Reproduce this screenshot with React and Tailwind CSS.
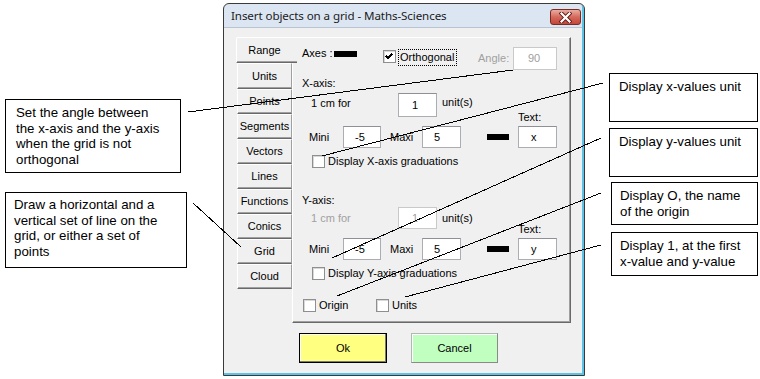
import React from "react";

const Check = ({ checked = false, className = "" }) => (
  <div
    className={`w-[13px] h-[13px] shrink-0 bg-white border border-[#8e8f8f] shadow-[inset_1px_1px_0_#d8d8d8] flex items-center justify-center ${className}`}
  >
    {checked && (
      <svg width="9" height="9" viewBox="0 0 9 9" shapeRendering="crispEdges">
        <path d="M1 4 L3 6 L7 2" stroke="#000" strokeWidth="2" fill="none" />
      </svg>
    )}
  </div>
);

const Field = ({ children, className = "" }) => (
  <div className={`shrink-0 bg-white border border-[#abadb3] border-t-[#8e9096] flex items-center ${className}`}>
    {children}
  </div>
);

const Tab = ({ label, className = "" }) => (
  <div
    className={`shrink-0 flex items-center justify-center border-l border-t border-l-white border-t-white border-r border-r-[#a0a0a0] border-b border-b-[#696969] shadow-[inset_0_-1px_0_#a0a0a0] ${className}`}
  >
    {label}
  </div>
);

export default function App() {
  return (
    <div className="relative w-[760px] h-[379px] bg-white flex overflow-hidden font-['Liberation_Sans',Arial,sans-serif] text-black">
      {/* Left annotations */}
      <div className="w-[223px] shrink-0 flex flex-col pl-[5px] text-[13.3px] leading-[15.5px]">
        <div className="mt-[99px] w-[176px] h-[74px] border border-black pl-[10px] pt-[5px] whitespace-nowrap">
          Set the angle between<br />the x-axis and the y-axis<br />when the grid is not<br />orthogonal
        </div>
        <div className="mt-[19px] w-[182px] h-[76px] border border-black pl-[8px] pt-[4px] whitespace-nowrap">
          Draw a horizontal and a<br />vertical set of line on the<br />grid, or either a set of<br />points
        </div>
      </div>

      {/* Dialog */}
      <div className="mt-[3px] w-[362px] h-[373px] shrink-0 flex flex-col border border-[#3a3a3a] rounded-t-[6px] bg-[#dce6f2] shadow-[inset_-2px_-2px_0_#5cc3e6] overflow-hidden">
        <div className="h-[23px] shrink-0 flex items-start justify-between pl-[7px] pr-[3px]">
          <div className="mt-[5px] text-[11.6px] leading-[14px] font-['Noto_Sans',sans-serif] text-[#1b1b1b] tracking-[-0.1px]">
            Insert objects on a grid - Maths-Sciences
          </div>
          <div className="mt-[5px] w-[31px] h-[16px] rounded-[3px] border border-[#7b2a20] bg-linear-to-b from-[#e9aca2] via-[#d4695c] to-[#c3453a] flex items-center justify-center">
            <svg width="13" height="11" viewBox="0 0 13 11">
              <path d="M2.5 1.5 L10.5 9.5 M10.5 1.5 L2.5 9.5" stroke="#5a1a12" strokeWidth="4" strokeLinecap="square" />
              <path d="M2.5 1.5 L10.5 9.5 M10.5 1.5 L2.5 9.5" stroke="#ffffff" strokeWidth="2.2" strokeLinecap="square" />
            </svg>
          </div>
        </div>

        <div className="flex-1 bg-[#f0f0f0] border-t border-t-[#b8c4d2] mr-[2px] mb-[2px] flex flex-col text-[11px] leading-[13px]">
          <div className="flex mt-[9px]">
            {/* Tabs */}
            <div className="w-[56px] ml-[12px] shrink-0 flex flex-col">
              <div className="relative z-10 h-[26px] w-[61px] shrink-0 flex items-center justify-center pr-[5px] bg-[#f0f0f0] border-l border-t border-l-white border-t-white border-b border-b-[#696969] shadow-[inset_0_-1px_0_#a0a0a0] rounded-tl-[2px]">
                Range
              </div>
              <Tab label="Units" className="h-[26px] w-[55px] ml-[1px]" />
              <Tab label="Points" className="h-[25px] w-[55px] ml-[1px]" />
              <Tab label="Segments" className="h-[25px] w-[55px] ml-[1px]" />
              <Tab label="Vectors" className="h-[25px] w-[55px] ml-[1px]" />
              <Tab label="Lines" className="h-[25px] w-[55px] ml-[1px]" />
              <Tab label="Functions" className="h-[25px] w-[55px] ml-[1px]" />
              <Tab label="Conics" className="h-[25px] w-[55px] ml-[1px]" />
              <Tab label="Grid" className="h-[25px] w-[55px] ml-[1px]" />
              <Tab label="Cloud" className="h-[25px] w-[55px] ml-[1px]" />
            </div>

            {/* Panel */}
            <div className="w-[279px] h-[286px] shrink-0 flex flex-col border border-t-white border-l-white border-r-[#696969] border-b-[#696969] shadow-[inset_-1px_-1px_0_#a0a0a0]">
              {/* Row A */}
              <div className="flex items-start mt-[9px] h-[23px]">
                <div className="ml-[9px] w-[32px] shrink-0">Axes :</div>
                <div className="w-[23px] h-[6px] mt-[4px] bg-black shrink-0" />
                <Check checked className="ml-[26px] mt-[3px]" />
                <div className="ml-[2px] mt-[2px] w-[59px] h-[17px] shrink-0 border border-dotted border-black flex items-center pl-[1px]">
                  Orthogonal
                </div>
                <div className="ml-[21px] w-[35px] mt-[5px] shrink-0 text-[#a0a0a0]">Angle:</div>
                <Field className="w-[44px] h-[23px] pl-[14px] border-[#c9c9c9] border-t-[#c9c9c9] text-[#a0a0a0]">90</Field>
              </div>

              {/* X-axis */}
              <div className="mt-[7px] h-[13px] ml-[9px]">X-axis:</div>

              <div className="flex items-start mt-[3px] h-[24px]">
                <div className="ml-[18px] w-[87px] mt-[4px] shrink-0">1 cm for</div>
                <Field className="w-[39px] h-[24px] pl-[13px]">1</Field>
                <div className="ml-[5px] w-[76px] mt-[3px] shrink-0">unit(s)</div>
                <div className="mt-[18px]">Text:</div>
              </div>

              <div className="flex items-center mt-[9px] h-[22px]">
                <div className="ml-[16px] w-[34px] shrink-0">Mini</div>
                <Field className="w-[38px] h-[22px] pl-[11px]">-5</Field>
                <div className="ml-[9px] w-[32px] shrink-0">Maxi</div>
                <Field className="w-[39px] h-[22px] pl-[11px]">5</Field>
                <div className="ml-[26px] w-[22px] h-[6px] bg-black shrink-0" />
                <Field className="ml-[9px] w-[39px] h-[22px] pl-[12px]">x</Field>
              </div>

              <div className="flex items-center mt-[7px] h-[13px]">
                <Check className="ml-[19px]" />
                <div className="ml-[3px]">Display X-axis graduations</div>
              </div>

              {/* Y-axis */}
              <div className="mt-[26px] h-[13px] ml-[9px]">Y-axis:</div>

              <div className="flex items-start h-[22px]">
                <div className="ml-[18px] w-[87px] mt-[5px] shrink-0 text-[#a0a0a0]">1 cm for</div>
                <Field className="w-[39px] h-[22px] pl-[13px] border-[#c9c9c9] border-t-[#c9c9c9] text-[#a0a0a0]">1</Field>
                <div className="ml-[5px] w-[76px] mt-[5px] shrink-0">unit(s)</div>
                <div className="mt-[16px]">Text:</div>
              </div>

              <div className="flex items-center mt-[9px] h-[22px]">
                <div className="ml-[16px] w-[34px] shrink-0">Mini</div>
                <Field className="w-[38px] h-[22px] pl-[11px]">-5</Field>
                <div className="ml-[9px] w-[32px] shrink-0">Maxi</div>
                <Field className="w-[39px] h-[22px] pl-[11px]">5</Field>
                <div className="ml-[26px] w-[22px] h-[6px] bg-black shrink-0" />
                <Field className="ml-[9px] w-[39px] h-[22px] pl-[12px]">y</Field>
              </div>

              <div className="flex items-center mt-[7px] h-[13px]">
                <Check className="ml-[19px]" />
                <div className="ml-[3px]">Display Y-axis graduations</div>
              </div>

              <div className="flex items-center mt-[19px] h-[13px]">
                <Check className="ml-[10px]" />
                <div className="ml-[3px] w-[57px] shrink-0">Origin</div>
                <Check />
                <div className="ml-[3px]">Units</div>
              </div>
            </div>
          </div>

          {/* Buttons */}
          <div className="flex mt-[10px] pl-[75px]">
            <div className="w-[88px] h-[30px] border border-black bg-[#ffff80] shadow-[inset_-1px_-1px_0_#7a7a7a,inset_1px_1px_0_#ffffff] flex items-center justify-center">
              Ok
            </div>
            <div className="ml-[24px] w-[87px] h-[30px] border border-[#b5b5b5] border-r-[#8a8a8a] border-b-[#8a8a8a] bg-[#c0ffc0] shadow-[inset_1px_1px_0_#ffffff] flex items-center justify-center">
              Cancel
            </div>
          </div>
        </div>
      </div>

      {/* Right annotations */}
      <div className="flex flex-col pl-[24px] text-[13.3px] leading-[15.5px] whitespace-nowrap">
        <div className="mt-[73px] w-[149px] h-[49px] border border-black pl-[9px] pt-[5px]">Display x-values unit</div>
        <div className="mt-[6px] w-[149px] h-[49px] border border-black pl-[9px] pt-[5px]">Display y-values unit</div>
        <div className="mt-[5px] ml-[2px] w-[147px] h-[43px] border border-black pl-[8px] pt-[5px]">
          Display O, the name<br />of the origin
        </div>
        <div className="mt-[7px] ml-[2px] w-[147px] h-[44px] border border-black pl-[8px] pt-[5px]">
          Display 1, at the first<br />x-value and y-value
        </div>
      </div>

      {/* Callout lines */}
      <svg
        className="absolute inset-0 pointer-events-none"
        width="760"
        height="379"
        viewBox="0 0 760 379"
        shapeRendering="crispEdges"
      >
        <g stroke="#000" strokeWidth="1" fill="none">
          <line x1="188" y1="112" x2="513" y2="70" />
          <line x1="193" y1="203" x2="241" y2="247" />
          <line x1="603" y1="83" x2="322" y2="156" />
          <line x1="601" y1="138" x2="332" y2="258" />
          <line x1="601" y1="193" x2="337" y2="296" />
          <line x1="601" y1="245" x2="405" y2="297" />
        </g>
      </svg>
    </div>
  );
}
